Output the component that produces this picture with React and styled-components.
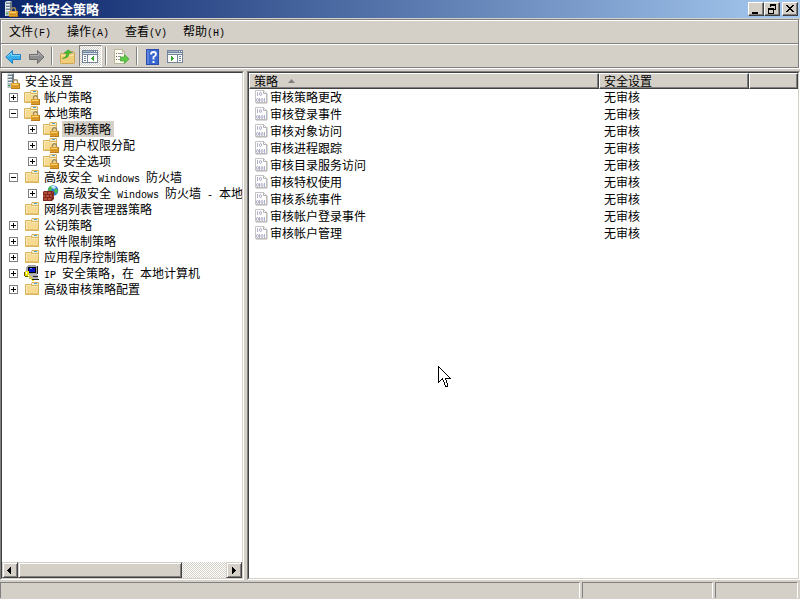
import React, { useState } from "react";
import styled, { createGlobalStyle, css } from "styled-components";

const FACE = "#d4d0c8";
const SHADOW = "#808080";
const DARK = "#404040";

const GlobalStyle = createGlobalStyle`
  * { box-sizing: border-box; }
  html, body { margin: 0; height: 100%; overflow: hidden; background: ${FACE}; }
  body, button, table {
    font-family: "Noto Sans CJK SC", sans-serif;
    font-size: 12px;
    line-height: 16px;
    color: #000;
  }
  button { margin: 0; padding: 0; border: 0; background: none; }
  svg { display: block; flex: none; }
`;

const dither = css`
  background: repeating-conic-gradient(#fff 0 25%, ${FACE} 0 50%) 0 0 / 2px 2px;
`;

const Window = styled.div`
  display: flex;
  flex-direction: column;
  height: 100vh;
  background: ${FACE};
  border-bottom: 1px solid #fff;
`;

const TitleBar = styled.header`
  display: flex;
  align-items: center;
  height: 18px;
  flex: none;
  padding: 0 2px 0 3px;
  gap: 2px;
  background: linear-gradient(to right, #0a246a, #a6caf0);
`;

const Title = styled.h1`
  flex: 1;
  margin: 0;
  color: #fff;
  font-size: 13px;
  line-height: 18px;
  font-weight: 700;
`;

const Captions = styled.div`
  display: flex;
`;

const CaptionButton = styled.button`
  width: 16px;
  height: 14px;
  display: grid;
  place-items: center;
  background: ${FACE};
  border: 1px solid;
  border-color: #fff ${DARK} ${DARK} #fff;
  box-shadow: inset -1px -1px ${SHADOW};
`;

const Bars = styled.div`
  flex: none;
  margin: 1px 1px 0 0;
  border: 1px solid ${SHADOW};
  box-shadow: inset 1px 1px #fff, 1px 1px #fff;
`;

const MenuBar = styled.nav`
  display: flex;
  align-items: center;
  height: 24px;
  padding-top: 2px;
  border-bottom: 1px solid ${SHADOW};
`;

const MenuItem = styled.button`
  padding: 0 8px;
  height: 20px;
`;

const Toolbar = styled.div`
  display: flex;
  align-items: center;
  height: 23px;
  padding-left: 1px;
  border-top: 1px solid #fff;
`;

const ToolButton = styled.button`
  width: 23px;
  height: 22px;
  padding-top: 1px;
  display: grid;
  place-items: center;
  ${(p) =>
    p.$pressed &&
    css`
      ${dither}
      border: 1px solid;
      border-color: ${SHADOW} #fff #fff ${SHADOW};
    `}
`;

const Separator = styled.div`
  width: 2px;
  height: 18px;
  margin: 0 3px;
  border-left: 1px solid ${SHADOW};
  border-right: 1px solid #fff;
`;

const Panes = styled.main`
  flex: 1;
  min-height: 0;
  display: grid;
  grid-template-columns: 244px minmax(0, 1fr);
  gap: 3px;
  padding-top: 3px;
`;

const Pane = styled.section`
  display: flex;
  flex-direction: column;
  min-width: 0;
  min-height: 0;
  overflow: hidden;
  background: #fff;
  border: 1px solid;
  border-color: ${SHADOW} #fff #fff ${SHADOW};
`;

const PaneInner = styled.div`
  flex: 1;
  min-height: 0;
  display: flex;
  flex-direction: column;
  border: 1px solid;
  border-color: ${DARK} ${FACE} ${FACE} ${DARK};
`;

const Tree = styled.ul`
  flex: 1;
  min-height: 0;
  margin: 0;
  padding: 0;
  list-style: none;
  overflow: hidden;
`;

const TreeRow = styled.li`
  display: flex;
  align-items: center;
  height: 16px;
  white-space: nowrap;
  padding-left: ${(p) => (p.$level ? 7 + (p.$level - 1) * 19 : 3)}px;
`;

const Expander = styled.button`
  flex: none;
  width: 9px;
  height: 9px;
  margin-right: 6px;
  border: 1px solid ${SHADOW};
  visibility: ${(p) => (p.$empty ? "hidden" : "visible")};
`;

const NodeLabel = styled.button`
  flex: none;
  height: 16px;
  margin-left: 3px;
  padding: 0 3px 0 1px;
  white-space: nowrap;
  background: ${(p) => (p.$selected ? FACE : "none")};
`;

const ScrollBar = styled.div`
  display: flex;
  height: 16px;
  flex: none;
`;

const ScrollButton = styled.button`
  width: 16px;
  height: 16px;
  flex: none;
  display: grid;
  place-items: center;
  background: ${FACE};
  border: 1px solid;
  border-color: ${FACE} ${DARK} ${DARK} ${FACE};
  box-shadow: inset 1px 1px #fff, inset -1px -1px ${SHADOW};
`;

const Track = styled.div`
  flex: 1;
  ${dither}
`;

const Thumb = styled.div`
  width: 79%;
  height: 16px;
  background: ${FACE};
  border: 1px solid;
  border-color: ${FACE} ${DARK} ${DARK} ${FACE};
  box-shadow: inset 1px 1px #fff, inset -1px -1px ${SHADOW};
`;

const List = styled.table`
  width: 100%;
  table-layout: fixed;
  border-collapse: separate;
  border-spacing: 0;
`;

const Column = styled.col`
  width: ${(p) => p.$width};
`;

const HeadCell = styled.th`
  height: 16px;
  padding: 0 4px;
  font-weight: 400;
  line-height: 14px;
  text-align: left;
  background: ${FACE};
  border: 1px solid;
  border-color: #fff ${DARK} ${DARK} #fff;
  box-shadow: inset -1px -1px ${SHADOW};
`;

const Cell = styled.td`
  height: 17px;
  padding: 0 5px;
  line-height: 16px;
  vertical-align: top;
  white-space: nowrap;
`;

const Inline = styled.span`
  display: flex;
  align-items: center;
  gap: ${(p) => p.$gap}px;
`;

const StatusBar = styled.footer`
  flex: none;
  display: grid;
  grid-template-columns: minmax(0, 1fr) 131px 83px;
  gap: 2px;
  height: 19px;
  padding: 2px 2px 1px 0;
`;

const StatusCell = styled.div`
  border: solid;
  border-width: 1px 1px 0 1px;
  border-color: ${SHADOW} #fff #fff ${SHADOW};
`;

const Latin = styled.span`
  font-family: "Liberation Mono", monospace;
  font-size: 10px;
  white-space: pre;
`;

const Pointer = styled.svg`
  position: absolute;
  left: 438px;
  top: 366px;
  pointer-events: none;
`;

/* Latin runs are set in a half-width face, ideographs in the full-width one. */
function Label({ children }) {
  return children
    .split(/([\x20-\x7e]+)/)
    .filter(Boolean)
    .map((part, i) =>
      /^[\x20-\x7e]/.test(part) ? <Latin key={i}>{part}</Latin> : part
    );
}

function Lock({ x = 7, y = 6 }) {
  return (
    <g transform={`translate(${x} ${y})`}>
      <path d="M2.500 5V2.500Q2.500.8 4.500.8T6.500 2.500V5" fill="none" stroke="#a08a60" strokeWidth="1.400" />
      <path d="M0 4h9v6H0z" fill="#b97a1c" />
      <path d="M0 4h8v5H0z" fill="#e0a02c" />
      <path d="M1 5.500h6" stroke="#fbd36c" />
      <path d="M1 7.500h6" stroke="#d08f22" />
    </g>
  );
}

function ServerIcon() {
  return (
    <svg width="16" height="16" viewBox="0 0 16 16">
      <path d="M7 1l2-1v15H7z" fill="#6d7a82" />
      <path d="M2 1l2-1h5L7 1z" fill="#dfe6ea" />
      <path d="M2 1h5v14H2z" fill="#aebcc5" />
      <path d="M2 1h1v14H2z" fill="#d5dee3" />
      <path d="M3 2.500h4M3 5.500h4M3 8.500h4" stroke="#6b7f8e" />
      <path d="M3 3.500h4M3 6.500h4M3 9.500h4" stroke="#eef3f6" />
      <path d="M3 12h2v1H3z" fill="#38a83f" />
      <Lock x={6} />
    </svg>
  );
}

function FolderIcon({ locked }) {
  return (
    <svg width="16" height="16" viewBox="0 0 16 16">
      <g transform={locked ? "translate(-1 0)" : undefined}>
        <path d="M1 3.500Q1 3 2 3h5l1-2h6q1 0 1 1v11.500q0 .5-1 .5H2q-1 0-1-1z" fill="#d9b25e" />
        <path d="M8 2h6v2H8z" fill="#fbeecb" />
        <path d="M10 2.500h3" stroke="#4c9fd4" />
        <path d="M2 4h5l1 1h6v8H2z" fill="#f7da92" />
        <path d="M2 4.500h5M8 5.500h6M2.500 4v8" fill="none" stroke="#fdecbb" />
        <path d="M2 12.500h12" stroke="#eac673" />
      </g>
      {locked && <Lock />}
    </svg>
  );
}

function FirewallIcon() {
  return (
    <svg width="16" height="16" viewBox="0 0 16 16">
      <circle cx="10" cy="5.500" r="5.300" fill="#2b7fd0" />
      <path d="M5 4q1-3 4-3.500l2 1-2 2-1 2-2 1zM12 4l2 0 1 2-2 3-2-3z" fill="#4fbf48" />
      <path d="M8 1q2-1 4 0l1 2-2 1-2-1z" fill="#bfe9fb" />
      <path d="M0 7l1-1h9l1 1v7l-2 2H0z" fill="#7c2a20" />
      <path d="M1 7h3v2H1zM5 7h3v2H5zM0 10h2v2H0zM3 10h3v2H3zM7 10h2v2H7zM1 13h3v2H1zM5 13h3v2H5z" fill="#b64e3a" />
      <path d="M9 7l1-1v2l-1 1zM10 10l1-1v2l-1 1z" fill="#96392c" />
    </svg>
  );
}

function IpIcon() {
  return (
    <svg width="16" height="16" viewBox="0 0 16 16" shapeRendering="crispEdges">
      <path d="M4 0h8v1h1v8H2V2h1V1h1z" fill="#a5a5a5" />
      <path d="M4 2h8v6H4z" fill="#000" />
      <path d="M5 3h6v4H5z" fill="#0612c8" />
      <path d="M6 3h2v1H6z" fill="#5297ff" />
      <path d="M5 9h8v1h1v4H5z" fill="#b4b4b4" />
      <path d="M9 11h5v1H9zM7 14h8v1H7zM13 1h1v8h-1z" fill="#222" />
      <path d="M1 6h4v4H4v1h1v1h1v1h1v1h1v1h2v1H8v-1H7v-1H6v-1H5v-1H4v-1H1z" fill="#f0e000" />
      <path d="M2 7h1v2H2z" fill="#fff" />
      <path d="M5 10h1v1h1v1h1v1h1v1H8v-1H7v-1H6v-1H5z" fill="#f0e000" />
      <path d="M1 11h3v1H1zM0 7h1v4H0z" fill="#5d5700" />
    </svg>
  );
}

function PolicyIcon() {
  return (
    <svg width="15" height="16" viewBox="0 0 15 16">
      <path d="M1.500 1.500h8l3 3v9h-11z" fill="#fff" stroke="#c4c4c4" />
      <path d="M9.500 1.500v3h3.500v9.500H2" fill="none" stroke="#b2b2b2" />
      <path d="M3.500 3v4M5.500 9v4M10.500 9v4" stroke="#b0b0c8" />
      <ellipse cx="6.500" cy="5" rx="1" ry="1.600" fill="none" stroke="#a6a6c0" strokeWidth=".9" />
      <ellipse cx="3.500" cy="11" rx="1" ry="1.600" fill="none" stroke="#a6a6c0" strokeWidth=".9" />
      <ellipse cx="8" cy="11" rx="1" ry="1.600" fill="none" stroke="#a6a6c0" strokeWidth=".9" />
    </svg>
  );
}

function ArrowIcon({ forward }) {
  return (
    <svg width="17" height="16" viewBox="0 0 17 16">
      {forward ? (
        <>
          <path d="M16 8L9.500 1.500v4h-8v5h8v4z" fill="#8f8f8f" stroke="#6c6c6c" />
          <path d="M2 6.500h8.500V4L14 7.500" fill="none" stroke="#b0b0b0" />
        </>
      ) : (
        <>
          <path d="M.8 8l6.700-6.500v4h8v5h-8v4z" fill="#36aeea" stroke="#2280c4" />
          <path d="M2.500 7.500L6.500 4v2.500H15" fill="none" stroke="#7dd4fa" />
        </>
      )}
    </svg>
  );
}

function UpFolderIcon() {
  return (
    <svg width="15" height="16" viewBox="0 0 15 16">
      <path d="M.5 5.500q0-1 1-1h5l2-2h5l1 1v10q0 1-1 1h-12q-1 0-1-1z" fill="#f0cd78" stroke="#cfa555" />
      <path d="M1 6.500h13" stroke="#fbe5a8" />
      <path d="M10 3h3v1h-3z" fill="#58a7d8" />
      <path d="M2.500 9.500Q7 8 6.500 4H4L8.500.8 11.500 4H9Q9.500 9 2.500 9.500z" fill="#48bd30" stroke="#38982c" strokeWidth=".6" />
    </svg>
  );
}

function PaneIcon({ mirrored }) {
  return (
    <svg width="17" height="13" viewBox="0 0 17 13" shapeRendering="crispEdges">
      <path d="M0 0h16v13H0z" fill="#74849a" />
      <path d="M1 1h10v1H1z" fill="#a3b2c6" />
      <path d="M12 1h1v1h-1zM14 1h1v1h-1z" fill="#fff" />
      <path d="M1 3h14v1H1z" fill="#dfe4ea" />
      {mirrored ? (
        <>
          <path d="M1 5h9v7H1zM11 5h4v7h-4z" fill="#fff" />
          <path d="M4 6h1v1h1v1h1v1H6v1H5v1H4z" fill="#38a52e" />
          <path d="M12 6h2v1h-2zM12 8h2v1h-2zM12 10h2v1h-2z" fill="#74849a" />
        </>
      ) : (
        <>
          <path d="M1 5h4v7H1zM6 5h9v7H6z" fill="#fff" />
          <path d="M11 6h1v5h-1v-1h-1V9H9V8h1V7h1z" fill="#38a52e" />
          <path d="M2 6h2v1H2zM2 8h2v1H2zM2 10h2v1H2z" fill="#74849a" />
        </>
      )}
    </svg>
  );
}

function ExportIcon() {
  return (
    <svg width="17" height="16" viewBox="0 0 17 16">
      <path d="M1.500.5h8l2 2v12h-10z" fill="#fffdf0" stroke="#b9b59c" />
      <path d="M9.500 1v2h2" fill="#ddd8b5" stroke="#b9b59c" />
      <path d="M3 4.500h1M3 7.500h1M3 10.500h1" stroke="#666" />
      <path d="M5 4.500h5M5 7.500h3M5 10.500h2" stroke="#9897a7" />
      <path d="M7.500 8h4V5.500L16 10l-4.500 4.500V12h-4z" fill="#62c848" stroke="#4aa838" strokeWidth=".8" />
    </svg>
  );
}

function HelpIcon() {
  return (
    <svg width="13" height="16" viewBox="0 0 13 16">
      <path d="M0 0h13v16H0z" fill="#2a4fb0" />
      <path d="M3 1h9v14H3z" fill="#3a66d0" />
      <path d="M1 1h2v14H1z" fill="#5c82dc" />
      <path d="M5 5.500Q5 3 7.500 3T10 5.300Q10 7 7.500 8v2.500" fill="none" stroke="#fff" strokeWidth="1.800" />
      <path d="M6.500 12h2v2h-2z" fill="#fff" />
    </svg>
  );
}

function Glyph({ d, width = 10, height = 10 }) {
  return (
    <svg width={width} height={height} viewBox={`0 0 ${width} ${height}`} shapeRendering="crispEdges">
      <path d={d} fillRule="evenodd" />
    </svg>
  );
}

const icons = {
  server: <ServerIcon />,
  locked: <FolderIcon locked />,
  folder: <FolderIcon />,
  firewall: <FirewallIcon />,
  ip: <IpIcon />,
};

const nodes = [
  { text: "安全设置", level: 0, icon: "server" },
  { text: "帐户策略", level: 1, icon: "locked", sign: "+" },
  { text: "本地策略", level: 1, icon: "locked", sign: "-" },
  { text: "审核策略", level: 2, icon: "locked", sign: "+" },
  { text: "用户权限分配", level: 2, icon: "locked", sign: "+" },
  { text: "安全选项", level: 2, icon: "locked", sign: "+" },
  { text: "高级安全 Windows 防火墙", level: 1, icon: "folder", sign: "-" },
  { text: "高级安全 Windows 防火墙 - 本地", level: 2, icon: "firewall", sign: "+" },
  { text: "网络列表管理器策略", level: 1, icon: "folder" },
  { text: "公钥策略", level: 1, icon: "folder", sign: "+" },
  { text: "软件限制策略", level: 1, icon: "folder", sign: "+" },
  { text: "应用程序控制策略", level: 1, icon: "folder", sign: "+" },
  { text: "IP 安全策略，在 本地计算机", level: 1, icon: "ip", sign: "+" },
  { text: "高级审核策略配置", level: 1, icon: "folder", sign: "+" },
];

const policies = [
  "审核策略更改",
  "审核登录事件",
  "审核对象访问",
  "审核进程跟踪",
  "审核目录服务访问",
  "审核特权使用",
  "审核系统事件",
  "审核帐户登录事件",
  "审核帐户管理",
];

const menus = ["文件(F)", "操作(A)", "查看(V)", "帮助(H)"];

export default function App() {
  const [selected, setSelected] = useState("审核策略");

  return (
    <Window>
      <GlobalStyle />
      <TitleBar>
        <ServerIcon />
        <Title>本地安全策略</Title>
        <Captions>
          <CaptionButton aria-label="最小化">
            <Glyph d="M1 8h6v2H1z" />
          </CaptionButton>
          <CaptionButton aria-label="还原">
            <Glyph d="M3 0h6v6H7V5h1V2H4v1H3zM1 4h6v6H1zM2 6v3h4V6z" />
          </CaptionButton>
        </Captions>
        <CaptionButton aria-label="关闭">
          <Glyph
            height={8}
            d="M1 0h2v1h1v1h2V1h1V0h2v1H8v1H7v1H6v1h1v1h1v1h1v1H7V6H6V5H4v1H3v1H1V6h1V5h1V4h1V3H3V2H2V1H1z"
          />
        </CaptionButton>
      </TitleBar>

      <Bars>
        <MenuBar>
          {menus.map((m) => (
            <MenuItem key={m}>
              <Label>{m}</Label>
            </MenuItem>
          ))}
        </MenuBar>
        <Toolbar role="toolbar">
          <ToolButton aria-label="后退"><ArrowIcon /></ToolButton>
          <ToolButton aria-label="前进"><ArrowIcon forward /></ToolButton>
          <Separator />
          <ToolButton aria-label="上一级"><UpFolderIcon /></ToolButton>
          <ToolButton $pressed aria-pressed="true" aria-label="显示控制台树"><PaneIcon /></ToolButton>
          <Separator />
          <ToolButton aria-label="导出列表"><ExportIcon /></ToolButton>
          <Separator />
          <ToolButton aria-label="帮助"><HelpIcon /></ToolButton>
          <ToolButton aria-label="显示操作窗格"><PaneIcon mirrored /></ToolButton>
        </Toolbar>
      </Bars>

      <Panes>
        <Pane>
          <PaneInner>
            <Tree>
              {nodes.map((n) => (
                <TreeRow key={n.text} $level={n.level}>
                  {n.level > 0 && (
                    <Expander $empty={!n.sign} aria-label={n.sign === "-" ? "折叠" : "展开"}>
                      <Glyph
                        width={7}
                        height={7}
                        d={n.sign === "-" ? "M1 3h5v1H1z" : "M1 3h2V1h1v2h2v1H4v2H3V4H1z"}
                      />
                    </Expander>
                  )}
                  {icons[n.icon]}
                  <NodeLabel $selected={selected === n.text} onClick={() => setSelected(n.text)}>
                    <Label>{n.text}</Label>
                  </NodeLabel>
                </TreeRow>
              ))}
            </Tree>
            <ScrollBar>
              <ScrollButton aria-label="向左滚动">
                <Glyph width={6} height={7} d="M4 0v7H3V6H2V5H1V4H0V3h1V2h1V1h1V0z" />
              </ScrollButton>
              <Track><Thumb /></Track>
              <ScrollButton aria-label="向右滚动">
                <Glyph width={6} height={7} d="M1 0v7h1V6h1V5h1V4h1V3H4V2H3V1H2V0z" />
              </ScrollButton>
            </ScrollBar>
          </PaneInner>
        </Pane>

        <Pane>
          <PaneInner>
            <List>
              <colgroup>
                <Column $width="350px" />
                <Column $width="150px" />
                <Column $width="auto" />
              </colgroup>
              <thead>
                <tr>
                  <HeadCell scope="col" aria-sort="ascending">
                    <Inline $gap={10}>
                      策略
                      <svg width="8" height="4" viewBox="0 0 8 4">
                        <path d="M0 4L3.500 0 7 4z" fill={SHADOW} />
                      </svg>
                    </Inline>
                  </HeadCell>
                  <HeadCell scope="col">安全设置</HeadCell>
                  <HeadCell />
                </tr>
              </thead>
              <tbody>
                {policies.map((p) => (
                  <tr key={p}>
                    <Cell>
                      <Inline $gap={1}>
                        <PolicyIcon />
                        {p}
                      </Inline>
                    </Cell>
                    <Cell>无审核</Cell>
                    <Cell />
                  </tr>
                ))}
              </tbody>
            </List>
          </PaneInner>
        </Pane>
      </Panes>

      <StatusBar>
        <StatusCell />
        <StatusCell />
        <StatusCell />
      </StatusBar>

      <Pointer width="13" height="22" viewBox="0 0 13 22" shapeRendering="crispEdges" aria-hidden="true">
        <path d="M.5.5v16l4-4 3 7.500h2l.5-1-3-7h5z" fill="#fff" stroke="#000" />
      </Pointer>
    </Window>
  );
}
